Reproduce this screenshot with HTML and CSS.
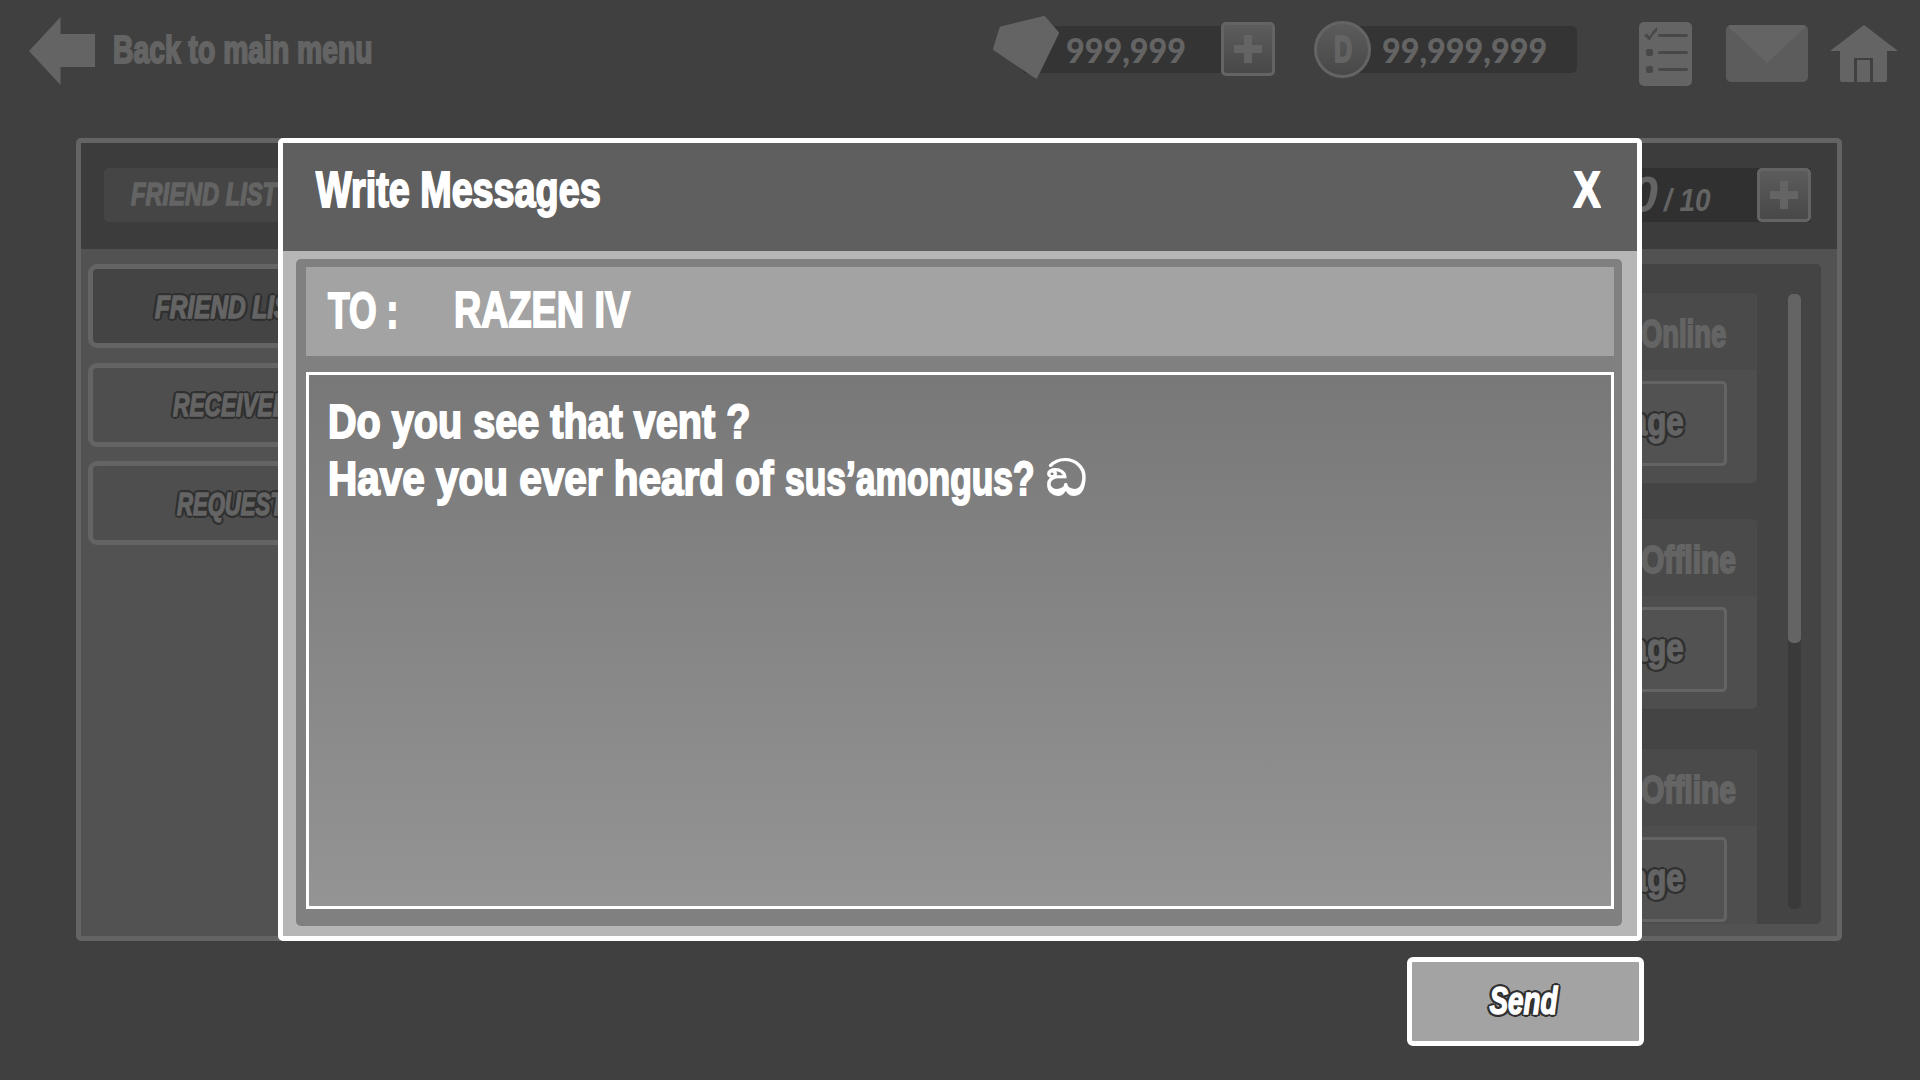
FILE: index.html
```html
<!DOCTYPE html>
<html lang="en">
<head>
<meta charset="utf-8">
<title>Write Messages</title>
<link rel="stylesheet" href="styles.css">
</head>
<body>
<header class="topbar">
  <a class="back">
    <svg width="67" height="68" viewBox="0 0 67 68"><path d="M0 34 31.500 0V17H66V50H31.500V68Z" fill="#646464"/></svg>
    <span class="label back-label">Back to main menu</span>
  </a>
  <div class="wallet gems">
    <svg class="gem" width="66" height="63" viewBox="0 0 66 63"><path d="M8 12 51 1.500 64.500 17 43 61 1.500 33Z" fill="#646464" stroke="#646464" stroke-width="3" stroke-linejoin="round"/></svg>
    <span class="amount">999,999</span>
    <button class="plus"></button>
  </div>
  <div class="wallet coins">
    <span class="coin"><span class="label coin-letter">D</span></span>
    <span class="amount amount-coins">99,999,999</span>
  </div>
  <nav class="tools">
    <svg width="53" height="64" viewBox="0 0 53 64"><rect width="53" height="64" rx="5" fill="#646464"/><g fill="#484848"><path d="M5 13.500 8 11.500 10.500 14.500Q13 9 18 5V9Q13 13 10.500 18.500Z"/><rect x="7" y="27" width="7" height="7" rx="2"/><rect x="7" y="44" width="7" height="7" rx="2"/><rect x="19" y="12" width="30" height="3" rx="1.500"/><rect x="19" y="29" width="30" height="3" rx="1.500"/><rect x="19" y="46" width="30" height="3" rx="1.500"/></g></svg>
    <svg class="mail" width="82" height="57" viewBox="0 0 82 57"><rect width="82" height="57" rx="5" fill="#5c5c5c"/><path d="M2 1.500Q3.500 0 5 0H77Q78.500 0 80 1.500L41 38Z" fill="#646464"/></svg>
    <svg class="home" width="68" height="57" viewBox="0 0 68 57"><path d="M34 0 68 26H57V55Q57 57 55 57H12Q10 57 10 55V26H0Z" fill="#646464"/><path d="M24 57V33H43V57H40V35H27V57Z" fill="#404040"/></svg>
  </nav>
</header>

<main class="friends">
  <div class="friends-head">
    <div class="tab"><span class="label slanted tab-label">FRIEND LIST</span></div>
    <div class="quota"><span class="label slanted quota-now">0</span><span class="quota-max"><span class="label slanted">/ 10</span></span><button class="plus"></button></div>
  </div>
  <div class="friends-body">
    <nav class="side">
      <button class="side-item active"><span class="label slanted outlined">FRIEND LIST</span></button>
      <button class="side-item received"><span class="label slanted outlined">RECEIVED</span></button>
      <button class="side-item request"><span class="label slanted outlined">REQUEST</span></button>
    </nav>
    <section class="list">
      <div class="cards">
        <article class="card"><div class="card-head"><span class="label online">Online</span></div><button class="msg"><span class="label outlined">Message</span></button></article>
        <article class="card"><div class="card-head"><span class="label offline">Offline</span></div><button class="msg"><span class="label outlined">Message</span></button></article>
        <article class="card last"><div class="card-head"><span class="label offline">Offline</span></div><button class="msg"><span class="label outlined">Message</span></button></article>
      </div>
      <div class="scroll"><div class="thumb"></div></div>
    </section>
  </div>
</main>

<div class="overlay">
  <section class="dialog">
    <header class="dialog-head"><h1 class="label">Write Messages</h1><button class="label close">X</button></header>
    <div class="dialog-body">
      <div class="form">
        <div class="to"><span class="to-key"><span class="label">TO :</span></span><span class="label to-name">RAZEN IV</span></div>
        <div class="message"><p><span class="label line1">Do you see that vent ?</span></p><p class="line2"><span class="label question">Have you ever heard of </span><span class="label name">sus’amongus?</span><span class="label sus">ඞ</span></p></div>
      </div>
    </div>
  </section>
  <button class="send"><span class="label slanted outlined">Send</span></button>
</div>
</body>
</html>
```
FILE: styles.css
```css
* { box-sizing: border-box; margin: 0; padding: 0; }
body { position: relative; width: 1920px; height: 1080px; overflow: hidden; background: #404040; color: #646464; font-family: "Liberation Sans", sans-serif; }
button { font: inherit; color: inherit; border: 0; background: none; }
svg { display: block; flex: none; }
.label { display: inline-block; font-weight: 700; white-space: pre; line-height: 1; transform: scaleX(.74); transform-origin: left; -webkit-text-stroke: 2px currentColor; stroke-linejoin: round; }
.slanted { font-style: italic; }
.outlined { -webkit-text-stroke-width: 1.5px; text-shadow: 4px 0 #303030, -4px 0 #303030, 0 3px #303030, 0 -3px #303030, 3px 2px #303030, -3px 2px #303030, 3px -2px #303030, -3px -2px #303030; }

.topbar { display: flex; height: 138px; padding: 16px 22px 0 29px; align-items: flex-start; }
.back { display: flex; width: 964px; gap: 17px; padding-top: 1px; }
.back-label { font-size: 38px; padding-top: 14px; transform: scaleX(.745); }
.wallet { display: flex; height: 47px; margin-top: 10px; border-radius: 5px; background: linear-gradient(#343434, #343434) no-repeat 30px 0 / 100% 100%; align-items: center; }
.gems { width: 282px; }
.gem { margin-top: -4px; }
.gems .plus { margin-top: -1px; }
.amount { width: 162px; padding-left: 7px; font: 900 34px/1 Lato, sans-serif; transform: scaleX(.95); transform-origin: 7px; }
.plus { flex: none; width: 54px; height: 54px; border: 3px solid #646464; border-radius: 5px; background: linear-gradient(#646464, #646464) center / 28px 8px no-repeat, linear-gradient(#646464, #646464) center / 8px 28px no-repeat, linear-gradient(#5c5c5c, #484848); }
.coins { width: 263px; margin-left: 39px; }
.coin { display: flex; flex: none; width: 57px; height: 57px; border: 3px solid #646464; border-radius: 50%; background: linear-gradient(#5c5c5c, #484848); align-items: center; justify-content: center; }
.coin-letter { font-size: 36px; transform: scaleX(.7); transform-origin: center; }
.amount-coins { width: auto; padding-left: 11px; transform-origin: 11px; }
.tools { display: flex; margin-left: 62px; padding-top: 6px; }
.mail { margin: 3px 22px 0 34px; }
.home { margin-top: 3px; }

.friends { display: flex; flex-direction: column; width: 1766px; height: 803px; margin-left: 76px; border: 5px solid #646464; border-radius: 5px; background: #525252; }
.friends-head { display: flex; height: 106px; padding: 25px 26px 0 23px; justify-content: space-between; background: #3c3c3c; }
.tab { width: 400px; height: 54px; padding: 10px 27px; border-radius: 5px; background: #454545; }
.tab-label { font-size: 32px; -webkit-text-stroke-width: 1.5px; }
.quota { display: flex; width: 400px; height: 54px; background: #303030; justify-content: flex-end; align-items: center; }
.quota-now { font-size: 50px; transform: none; -webkit-text-stroke-width: 0; }
.quota-max { width: 99px; padding-left: 6px; padding-top: 11px; font-size: 31px; }
.quota-max .label { transform: scaleX(.9); -webkit-text-stroke-width: 0; }
.friends-body { display: flex; flex: 1; padding: 15px 16px 12px 7px; justify-content: space-between; }
.side { display: flex; flex-direction: column; gap: 14.5px; width: 280px; }
.side-item { height: 84px; padding: 2px 0 0 62px; border: 5px solid #646464; border-radius: 9px; background: #4e4e4e; font-size: 32px; text-align: left; }
.side-item.active { background: #444; }
.active .label { transform: scaleX(.76); }
.received { padding-left: 80px; }
.received .label { transform: scaleX(.71); }
.request { padding-left: 84px; }
.request .label { transform: scaleX(.69); }
.list { display: flex; width: 1400px; height: 660px; padding: 29px 20px 0 0; border-radius: 5px; background: #444; justify-content: flex-end; overflow: hidden; }
.cards { display: flex; flex-direction: column; width: 1300px; gap: 36px; }
.card { display: flex; flex-direction: column; flex: none; height: 190px; border-radius: 5px; background: #4e4e4e; }
.card.last { margin-top: 4px; }
.card-head { height: 77px; padding: 20px 0 0 1184px; border-radius: 5px 5px 0 0; background: #4a4a4a; font-size: 38px; }
.online { transform: scaleX(.72); }
.offline { transform: scaleX(.79); }
.msg { align-self: flex-end; width: 230px; height: 85px; margin: 11px 30px 0 0; padding: 0 40px 2px 0; border: 3px solid #646464; border-radius: 5px; background: #525252; font-size: 38px; text-align: right; }
.msg .label { transform: scaleX(.82); transform-origin: right; }
.scroll { width: 13px; height: 615px; margin: 1px 0 0 31px; border-radius: 5px; background: #3a3a3a; }
.thumb { height: 349px; border-radius: 5px; background: #646464; }

.overlay { position: absolute; left: 278px; top: 138px; display: flex; flex-direction: column; width: 1366px; color: #fff; }
.dialog { width: 1364px; height: 803px; border: 5px solid #fff; border-radius: 5px; background: #b6b6b6; }
.dialog-head { display: flex; height: 108px; padding: 22px 37px 0 33px; justify-content: space-between; align-items: flex-start; background: #5f5f5f; }
h1 { font-size: 50px; }
h1.label { transform: scaleX(.755); }
.close { font-size: 50px; transform: scaleX(.8); transform-origin: right; }
.dialog-body { padding: 8px 15px 10px 13px; }
.form { display: flex; flex-direction: column; gap: 16px; height: 667px; padding: 8px 8px 17px 10px; border-radius: 5px; background: #808080; }
.to { display: flex; height: 89px; padding: 18px 22px; background: #a3a3a3; font-size: 50px; line-height: 1; }
.to-key { width: 126px; padding-top: 1px; }
.to-key .label { transform: scaleX(.71); }
.to-name { transform: scaleX(.755); }
.message { flex: none; height: 537px; padding: 18px 19px; border: 3px solid #fff; background: linear-gradient(#787878, #949494); font-size: 49px; line-height: 57px; }
.message p { height: 57px; }
.message .label { line-height: 57px; }
.line1 { transform: scaleX(.808); }
.line2 { display: flex; }
.question { margin-right: -96px; transform: scaleX(.826); }
.name { margin-right: -85px; transform: scaleX(.722); }
.label.sus { font-size: 50px; font-weight: 400; -webkit-text-stroke-width: 2px; transform: scaleX(1.1); }
.send { align-self: flex-end; width: 237px; height: 89px; margin-top: 16px; border: 5px solid #fff; border-radius: 6px; background: #a3a3a3; font-size: 38px; }
.send .label { margin-right: 4px; transform: scaleX(.73); transform-origin: center; }
```
